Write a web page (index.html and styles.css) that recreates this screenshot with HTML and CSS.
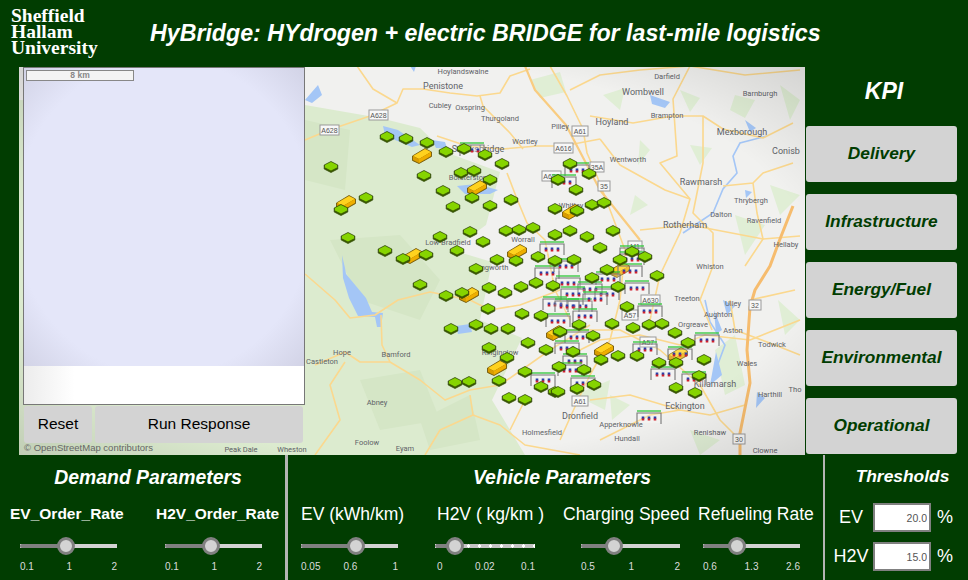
FILE: index.html
```html
<!DOCTYPE html>
<html lang="en">

<head>
    <meta charset="UTF-8">
    <meta name="viewport" content="width=device-width, initial-scale=1.0">
    <title>HyBridge</title>
    <link rel="stylesheet" href="styles.css">
</head>

<body>
    <header class="header">
        <div class="logo">Sheffield<br>Hallam<br>University</div>
        <h1 class="title">HyBridge: HYdrogen + electric BRIDGE for last-mile logistics</h1>
    </header>

    <div class="main">
        <div class="map">
            <svg class="mapimg" viewBox="19 67 786 388" width="786" height="388">
                <defs>
                    <radialGradient id="fade" cx="50%" cy="50%" r="72%">
                        <stop offset="70%" stop-color="#000" stop-opacity="0" />
                        <stop offset="100%" stop-color="#000" stop-opacity="0.13" />
                    </radialGradient>
                    <g id="pin">
                        <path d="M-6.800,-2 L0,-5.500 L6.800,-2 L6.800,2 L0,5.500 L-6.800,2 Z" fill="#3c5c00" stroke="#2c4700" stroke-width="0.7" />
                        <path d="M-6,-2 L0,-5 L6,-2 L6,0.500 L0,3.500 L-6,0.500 Z" fill="#86d400" />
                    </g>
                    <g id="fuel">
                        <path d="M-9.500,0 L3,-7.500 L9.500,-4 L9.500,0.500 L-3,7.500 L-9.500,4.500 Z" fill="#8a6400" stroke="#6d5200" stroke-width="0.8" />
                        <path d="M-9,0 L3,-7 L9,-4 L-3,3 Z" fill="#ffd21f" />
                        <path d="M-3,3 L9,-4 L9,0 L-3,7 Z" fill="#eeae00" />
                        <path d="M-9,0 L-3,3 L-3,7 L-9,4 Z" fill="#d99c00" />
                    </g>
                    <g id="station">
                        <rect x="-12" y="-4" width="24" height="10" fill="#fff" fill-opacity="0.2" />
                        <path d="M-12,7 V-4 H12 V7" fill="none" stroke="#777" stroke-width="1.1" />
                        <path d="M-12,-6 H12" stroke="#2fc83a" stroke-width="1.3" />
                        <path d="M-6,-0.500 V2 M0,-0.500 V2 M6,-0.500 V2" stroke="#2a3fa8" stroke-width="2.6" />
                        <path d="M-6,1.500 V3.500 M0,1.500 V3.500 M6,1.500 V3.500" stroke="#d0202c" stroke-width="2.6" />
                    </g>
                </defs>

                <rect x="19" y="67" width="786" height="388" fill="#f1f1ef" />

                <!-- peak district and small green bits -->
                <path class="park" d="M19,100 L305,105 L380,118 L420,128 L445,152 L500,172 L486,225 L452,250 L492,262 L480,320 L522,338 L492,400 L525,455 L19,455 Z" />
                <path class="park2" d="M330,240 L400,235 L440,280 L420,320 L360,300 Z M360,380 L420,370 L440,420 L380,430 Z M305,120 L350,130 L345,190 L305,180 Z M420,420 L470,395 L480,440 L430,450 Z" />
                <path class="patch" d="M530,80 L560,72 L566,92 L540,98 Z M603,95 L625,88 L620,110 Z M680,90 L700,98 L690,112 Z M735,95 L755,100 L745,118 L730,110 Z M640,140 L650,150 L638,165 Z M690,145 L712,148 L700,165 Z M635,195 L648,205 L630,215 Z M735,215 L765,225 L745,255 Z M780,85 L800,100 L790,120 Z M770,185 L800,195 L780,215 Z M575,395 L610,380 L605,410 Z M715,350 L735,335 L745,385 L725,395 Z M690,430 L720,440 L700,455 Z M778,300 L800,320 L785,335 Z M610,395 L630,405 L612,420 Z" />

                <!-- water -->
                <path class="river" d="M767,136 L740,143 L733,156 L737,173 L723,189 L713,213 L683,233" />
                <path class="river" d="M705,300 L710,322 L725,345 L712,380" />
                <path class="water" d="M383,126 L398,130 L420,145 L412,147 L395,140 L385,135 Z M432,140 L445,142 L447,148 L436,148 Z M457,186 L476,184 L498,190 L490,194 L465,194 Z M342,255 L345,268 L346,274 L366,298 L372,312 L383,313 L381,327 L377,327 L375,317 L358,316 L349,298 L343,278 Z M456,326 L470,324 L472,332 L458,334 Z M318,85 L322,95 L312,103 L305,100 Z M410,66 L416,66 L414,72 Z M650,95 L670,102 L665,108 L652,104 Z M745,120 L756,128 L750,132 Z M723,300 L735,306 L727,315 Z M745,190 L752,192 L746,198 Z M714,310 L722,330 L716,334 Z M757,392 L765,398 L756,408 Z M716,352 L722,375 L710,385 Z" />

                <!-- roads -->
                <g class="roads">
                    <path d="M305,140 L329,130 L370,116 L397,103 L403,89 L423,89 L450,93 L477,96 L500,93 L510,76 L530,69" />
                    <path d="M357,66 L373,89 L397,103" />
                    <path d="M437,136 L467,146 L503,149 L537,146 L563,146 L600,139" />
                    <path d="M550,66 L567,96 L583,129 L587,153 L597,176 L612,215 L625,250 L620,300 L610,340 L590,375 L578,400 L560,440" />
                    <path d="M480,96 L483,106 L510,133 L523,149" />
                    <path d="M507,173 L517,199 L527,223 L545,240 L555,290 L570,320" />
                    <path d="M590,116 L633,123 L673,116 L703,116 L723,129 L763,138 L793,123" />
                    <path d="M690,66 L673,99 L677,156 L660,163 L690,199 L680,233 L660,275 L650,320" />
                    <path d="M703,116 L703,163 L693,213 L713,233 L713,266 L700,300 L712,330" />
                    <path d="M793,163 L763,173 L753,183 L723,186 M753,183 L757,213 L763,239 L745,266" />
                    <path d="M600,139 L620,165 L665,190 L690,199" />
                    <path d="M570,90 L600,75 L640,70 M640,70 L690,66 M690,66 L745,75 L800,70" />
                    <path d="M305,274 L335,300 L350,318 L375,315 L398,300 L430,292 L470,300 L490,310 L520,305 L560,290" />
                    <path d="M381,315 L382,345 L390,362 L420,380 L445,400 L470,390 L500,385 L550,350 L590,325" />
                    <path d="M315,365 L345,352 L360,362 L390,362" />
                    <path d="M345,362 L330,385 L340,420 L315,455 M470,395 L473,415 L440,430 L425,455" />
                    <path d="M473,415 L500,425 L525,445 L580,455 M525,400 L510,430" />
                    <path d="M570,355 L600,340 L640,335 L680,345 L705,335 L750,340 L800,320" />
                    <path d="M560,330 L620,330 L660,350 L700,385 L720,420 L740,440" />
                    <path d="M590,400 L630,395 L680,410 L710,415 L745,405 M600,440 L650,415 L680,410" />
                    <path d="M730,300 L735,330 L775,345 L800,355" />
                    <path d="M750,300 L795,290 M640,230 L690,225 L763,239 L800,236" />
                    <path class="motorway" d="M793,206 L780,239 L770,266 L755,290 L750,307 L747,350 L750,383 L740,433 L740,455" />
                    <path class="motorway-thin" d="M525,66 L535,90 L566,125 L600,190 L640,240" />
                </g>

                <!-- place names -->
                <g class="place">
                    <text x="463" y="74">Hoylandswaine</text>
                    <text x="440" y="108">Cubley</text>
                    <text x="470" y="110">Oxspring</text>
                    <text x="500" y="121">Thurgoland</text>
                    <text x="560" y="129">Pilley</text>
                    <text x="525" y="144">Wortley</text>
                    <text x="470" y="180">Bolsterstone</text>
                    <text x="571" y="208">Whitley</text>
                    <text x="523" y="242">Worrall</text>
                    <text x="448" y="245">Low Bradfield</text>
                    <text x="490" y="270">Dungworth</text>
                    <text x="667" y="79">Darfield</text>
                    <text x="760" y="96">Barnburgh</text>
                    <text x="667" y="118">Brampton</text>
                    <text x="628" y="162">Wentworth</text>
                    <text x="751" y="203">Thrybergh</text>
                    <text x="721" y="217">Dalton</text>
                    <text x="764" y="223">Ravenfield</text>
                    <text x="786" y="247">Hellaby</text>
                    <text x="710" y="269">Whiston</text>
                    <text x="687" y="301">Treeton</text>
                    <text x="693" y="327">Orgreave</text>
                    <text x="733" y="306">Ulley</text>
                    <text x="718" y="317">Aughton</text>
                    <text x="733" y="333">Aston</text>
                    <text x="772" y="347">Todwick</text>
                    <text x="747" y="366">Wales</text>
                    <text x="770" y="397">Harthill</text>
                    <text x="795" y="392">Tho</text>
                    <text x="621" y="427">Apperknowle</text>
                    <text x="627" y="441">Hundall</text>
                    <text x="710" y="435">Renishaw</text>
                    <text x="765" y="453">Clowne</text>
                    <text x="342" y="355">Hope</text>
                    <text x="396" y="357">Bamford</text>
                    <text x="322" y="364">Castleton</text>
                    <text x="377" y="405">Abney</text>
                    <text x="367" y="445">Foolow</text>
                    <text x="405" y="451">Eyam</text>
                    <text x="542" y="435">Holmesfield</text>
                    <text x="500" y="355">Ringinglow</text>
                    <text x="241" y="452">Peak Dale</text>
                    <text x="292" y="452">Wheston</text>
                </g>
                <g class="town">
                    <text x="443" y="89">Penistone</text>
                    <text x="478" y="152">Stocksbridge</text>
                    <text x="643" y="95">Wombwell</text>
                    <text x="612" y="125">Hoyland</text>
                    <text x="742" y="135">Mexborough</text>
                    <text x="786" y="154">Conisb</text>
                    <text x="701" y="185">Rawmarsh</text>
                    <text x="685" y="228">Rotherham</text>
                    <text x="715" y="387">Killamarsh</text>
                    <text x="685" y="409">Eckington</text>
                    <text x="580" y="419">Dronfield</text>
                </g>

                <!-- road badges -->
                <g class="badge">
                    <rect x="369" y="110" width="19" height="10" /><text x="378.500" y="118">A628</text>
                    <rect x="320" y="125" width="19" height="10" /><text x="329.500" y="133">A628</text>
                    <rect x="572" y="126" width="16" height="10" /><text x="580" y="134">A61</text>
                    <rect x="554" y="143" width="19" height="10" /><text x="563.500" y="151">A616</text>
                    <rect x="542" y="171" width="19" height="10" /><text x="551.500" y="179">A629</text>
                    <rect x="590" y="162" width="14" height="10" /><text x="597" y="170">35A</text>
                    <rect x="598" y="181" width="12" height="10" /><text x="604" y="189">35</text>
                    <rect x="628" y="241" width="14" height="10" /><text x="635" y="249">M1</text>
                    <rect x="641" y="295" width="19" height="10" /><text x="650.500" y="303">A630</text>
                    <rect x="622" y="310" width="16" height="10" /><text x="630" y="318">A57</text>
                    <rect x="640" y="337" width="16" height="10" /><text x="648" y="345">A57</text>
                    <rect x="572" y="396" width="16" height="10" /><text x="580" y="404">A61</text>
                    <rect x="749" y="300" width="12" height="10" /><text x="755" y="308">32</text>
                    <rect x="733" y="434" width="12" height="10" /><text x="739" y="442">30</text>
                </g>

                <rect x="19" y="67" width="786" height="388" fill="url(#fade)" />

                <!-- fuel stations -->
                <use href="#fuel" x="422" y="156" />
                <use href="#fuel" x="477" y="188" />
                <use href="#fuel" x="346" y="203" />
                <use href="#fuel" x="572" y="212" />
                <use href="#fuel" x="517" y="252" />
                <use href="#fuel" x="413" y="256" />
                <use href="#fuel" x="469" y="295" />
                <use href="#fuel" x="497" y="368" />
                <use href="#fuel" x="620" y="270" />
                <use href="#fuel" x="556" y="333" />
                <use href="#fuel" x="604" y="350" />
                <use href="#fuel" x="678" y="355" />

                <!-- charge points -->
                <use href="#station" x="472" y="149" />
                <use href="#station" x="577" y="169" />
                <use href="#station" x="564" y="181" />
                <use href="#station" x="552" y="248" />
                <use href="#station" x="547" y="272" />
                <use href="#station" x="566" y="265" />
                <use href="#station" x="632" y="252" />
                <use href="#station" x="632" y="258" />
                <use href="#station" x="630" y="270" />
                <use href="#station" x="608" y="278" />
                <use href="#station" x="637" y="287" />
                <use href="#station" x="568" y="282" />
                <use href="#station" x="590" y="288" />
                <use href="#station" x="573" y="293" />
                <use href="#station" x="555" y="303" />
                <use href="#station" x="580" y="305" />
                <use href="#station" x="607" y="293" />
                <use href="#station" x="558" y="320" />
                <use href="#station" x="585" y="315" />
                <use href="#station" x="567" y="305" />
                <use href="#station" x="595" y="298" />
                <use href="#station" x="650" y="310" />
                <use href="#station" x="577" y="336" />
                <use href="#station" x="645" y="348" />
                <use href="#station" x="567" y="347" />
                <use href="#station" x="575" y="360" />
                <use href="#station" x="570" y="369" />
                <use href="#station" x="680" y="353" />
                <use href="#station" x="707" y="339" />
                <use href="#station" x="663" y="373" />
                <use href="#station" x="694" y="378" />
                <use href="#station" x="583" y="382" />
                <use href="#station" x="649" y="417" />
                <use href="#station" x="543" y="379" />

                <!-- depots -->
                <use href="#pin" x="387" y="137" /><use href="#pin" x="406" y="139" /><use href="#pin" x="427" y="143" />
                <use href="#pin" x="446" y="152" /><use href="#pin" x="464" y="149" /><use href="#pin" x="485" y="155" />
                <use href="#pin" x="502" y="164" /><use href="#pin" x="331" y="167" /><use href="#pin" x="424" y="176" />
                <use href="#pin" x="461" y="173" /><use href="#pin" x="474" y="171" /><use href="#pin" x="490" y="180" />
                <use href="#pin" x="443" y="191" /><use href="#pin" x="366" y="198" /><use href="#pin" x="341" y="210" />
                <use href="#pin" x="472" y="198" /><use href="#pin" x="453" y="207" /><use href="#pin" x="490" y="206" />
                <use href="#pin" x="511" y="200" /><use href="#pin" x="555" y="209" /><use href="#pin" x="576" y="190" />
                <use href="#pin" x="570" y="164" /><use href="#pin" x="558" y="180" /><use href="#pin" x="589" y="174" />
                <use href="#pin" x="592" y="205" /><use href="#pin" x="604" y="203" /><use href="#pin" x="577" y="211" />
                <use href="#pin" x="348" y="238" /><use href="#pin" x="440" y="237" /><use href="#pin" x="470" y="232" />
                <use href="#pin" x="483" y="242" /><use href="#pin" x="506" y="231" /><use href="#pin" x="519" y="230" />
                <use href="#pin" x="533" y="228" /><use href="#pin" x="555" y="235" /><use href="#pin" x="570" y="231" />
                <use href="#pin" x="587" y="237" /><use href="#pin" x="613" y="231" /><use href="#pin" x="385" y="251" />
                <use href="#pin" x="457" y="251" /><use href="#pin" x="426" y="255" /><use href="#pin" x="600" y="248" />
                <use href="#pin" x="403" y="259" /><use href="#pin" x="497" y="260" /><use href="#pin" x="516" y="261" />
                <use href="#pin" x="476" y="269" /><use href="#pin" x="538" y="257" /><use href="#pin" x="420" y="285" />
                <use href="#pin" x="446" y="296" /><use href="#pin" x="462" y="293" /><use href="#pin" x="489" y="288" />
                <use href="#pin" x="505" y="293" /><use href="#pin" x="521" y="287" /><use href="#pin" x="536" y="283" />
                <use href="#pin" x="553" y="286" /><use href="#pin" x="488" y="309" /><use href="#pin" x="522" y="314" />
                <use href="#pin" x="541" y="316" /><use href="#pin" x="451" y="329" /><use href="#pin" x="476" y="325" />
                <use href="#pin" x="491" y="329" /><use href="#pin" x="508" y="329" /><use href="#pin" x="528" y="343" />
                <use href="#pin" x="546" y="350" /><use href="#pin" x="489" y="348" /><use href="#pin" x="507" y="358" />
                <use href="#pin" x="525" y="372" /><use href="#pin" x="499" y="381" /><use href="#pin" x="455" y="383" />
                <use href="#pin" x="469" y="382" /><use href="#pin" x="541" y="387" /><use href="#pin" x="509" y="398" />
                <use href="#pin" x="525" y="400" /><use href="#pin" x="555" y="392" /><use href="#pin" x="555" y="261" />
                <use href="#pin" x="574" y="260" /><use href="#pin" x="607" y="270" /><use href="#pin" x="592" y="278" />
                <use href="#pin" x="657" y="276" /><use href="#pin" x="618" y="287" /><use href="#pin" x="627" y="307" />
                <use href="#pin" x="579" y="325" /><use href="#pin" x="612" y="324" /><use href="#pin" x="633" y="328" />
                <use href="#pin" x="649" y="325" /><use href="#pin" x="662" y="324" /><use href="#pin" x="675" y="333" />
                <use href="#pin" x="560" y="332" /><use href="#pin" x="593" y="336" /><use href="#pin" x="632" y="252" />
                <use href="#pin" x="645" y="257" /><use href="#pin" x="620" y="260" /><use href="#pin" x="618" y="356" />
                <use href="#pin" x="601" y="360" /><use href="#pin" x="637" y="356" /><use href="#pin" x="688" y="343" />
                <use href="#pin" x="704" y="360" /><use href="#pin" x="659" y="363" /><use href="#pin" x="676" y="363" />
                <use href="#pin" x="559" y="367" /><use href="#pin" x="584" y="370" /><use href="#pin" x="573" y="352" />
                <use href="#pin" x="699" y="376" /><use href="#pin" x="676" y="388" /><use href="#pin" x="695" y="393" />
                <use href="#pin" x="594" y="385" /><use href="#pin" x="577" y="389" /><use href="#pin" x="558" y="392" />
            </svg>

            <div class="panel">
                <div class="plot">
                    <div class="scalebar">8 km</div>
                </div>
                <div class="plotfoot"></div>
                <div class="actions">
                    <button class="btn btn-reset">Reset</button>
                    <button class="btn btn-run">Run Response</button>
                </div>
            </div>
            <div class="attrib">© OpenStreetMap contributors</div>
        </div>

        <aside class="kpi">
            <div class="kpi-head">KPI</div>
            <button class="kpi-btn">Delivery</button>
            <button class="kpi-btn">Infrastructure</button>
            <button class="kpi-btn">Energy/Fuel</button>
            <button class="kpi-btn">Environmental</button>
            <button class="kpi-btn">Operational</button>
        </aside>
    </div>

    <div class="controls">
        <section class="group group-demand">
            <h2 class="group-head">Demand Parameters</h2>
            <div class="params">
                <div class="param">
                    <div class="param-label bold shift-a">EV_Order_Rate</div>
                    <div class="slider"><span class="fill" style="width:46px"></span><span class="thumb" style="left:37px"></span></div>
                    <div class="ticks ticks-mid"><span>0.1</span><span>1</span><span>2</span></div>
                </div>
                <div class="param param-h2v-order">
                    <div class="param-label bold shift-b">H2V_Order_Rate</div>
                    <div class="slider"><span class="fill" style="width:46px"></span><span class="thumb" style="left:37px"></span></div>
                    <div class="ticks ticks-mid"><span>0.1</span><span>1</span><span>2</span></div>
                </div>
            </div>
        </section>

        <section class="group group-vehicle">
            <h2 class="group-head">Vehicle Parameters</h2>
            <div class="params">
                <div class="param">
                    <div class="param-label">EV (kWh/km)</div>
                    <div class="slider"><span class="fill" style="width:55px"></span><span class="thumb" style="left:46px"></span></div>
                    <div class="ticks ticks-wide"><span>0.05</span><span>0.6</span><span>1</span></div>
                </div>
                <div class="param param-h2v">
                    <div class="param-label shift-c">H2V ( kg/km )</div>
                    <div class="slider slider-dots"><span class="fill" style="width:20px"></span><span class="thumb" style="left:11px"></span></div>
                    <div class="ticks ticks-inset"><span>0</span><span>0.02</span><span>0.1</span></div>
                </div>
                <div class="param param-charge">
                    <div class="param-label shift-d">Charging Speed</div>
                    <div class="slider"><span class="fill" style="width:33px"></span><span class="thumb" style="left:24px"></span></div>
                    <div class="ticks ticks-mid"><span>0.5</span><span>1</span><span>2</span></div>
                </div>
                <div class="param param-refuel">
                    <div class="param-label shift-e">Refueling Rate</div>
                    <div class="slider"><span class="fill" style="width:34px"></span><span class="thumb" style="left:25px"></span></div>
                    <div class="ticks"><span>0.6</span><span>1.3</span><span>2.6</span></div>
                </div>
            </div>
        </section>

        <section class="group group-thresholds">
            <h2 class="group-head small">Thresholds</h2>
            <div class="thresh">
                <span class="thresh-label">EV</span>
                <input class="thresh-input" type="text" value="20.0">
                <span class="thresh-unit">%</span>
            </div>
            <div class="thresh">
                <span class="thresh-label">H2V</span>
                <input class="thresh-input" type="text" value="15.0">
                <span class="thresh-unit">%</span>
            </div>
        </section>
    </div>
</body>

</html>
```

FILE: styles.css
```css
* {
    margin: 0;
    border: 0;
    padding: 0;
    box-sizing: border-box;
}

body {
    width: 968px;
    height: 580px;
    overflow: hidden;
    background-color: #013d01;
    color: white;
    font-family: "Liberation Sans", Arial, sans-serif;
}

/* top bar */
.header {
    height: 67px;
    display: flex;
    align-items: flex-start;
}

.logo {
    margin: 8px 0 0 11px;
    width: 139px;
    font-family: "Liberation Serif", serif;
    font-weight: bold;
    font-size: 19.5px;
    line-height: 16px;
}

.title {
    margin-top: 19px;
    font-size: 23.2px;
    line-height: 28px;
    font-weight: bold;
    font-style: italic;
    white-space: nowrap;
}

/* map + kpi */
.main {
    height: 388px;
    display: flex;
    padding-left: 19px;
}

.map {
    position: relative;
    width: 786px;
    height: 388px;
    overflow: hidden;
}

.mapimg {
    display: block;
}

.park {
    fill: #dcebcf;
}

.park2 {
    fill: #d5e6c6;
}

.patch {
    fill: #e0eed5;
}

.water {
    fill: #a4c6f6;
}

.river {
    fill: none;
    stroke: #a4c6f6;
    stroke-width: 1.6;
}

.roads path {
    fill: none;
    stroke: #fbd88e;
    stroke-width: 1.6;
    stroke-linejoin: round;
}

.roads .motorway {
    stroke: #f6bc6e;
    stroke-width: 3;
}

.roads .motorway-thin {
    stroke: #f9cc80;
    stroke-width: 2.2;
}

.place text,
.town text {
    text-anchor: middle;
    fill: #5f6368;
    font-family: Roboto, "Liberation Sans", sans-serif;
    font-size: 7.5px;
}

.town text {
    font-size: 9px;
}

.badge rect {
    fill: #f8f8f8;
    stroke: #9a9a9a;
    stroke-width: 1;
}

.badge text {
    text-anchor: middle;
    fill: #555;
    font-size: 7px;
}

/* panel on top of the map */
.panel {
    position: absolute;
    left: 4px;
    top: 0;
    width: 282px;
    display: flex;
    flex-direction: column;
}

.plot {
    height: 299px;
    padding: 2px 0 0 2px;
    border: 1px solid #777;
    border-width: 1px 1px 0 1px;
    background: radial-gradient(ellipse at center, #e4e6f9 75%, #d2d3e6 100%);
}

.scalebar {
    width: 108px;
    height: 11px;
    background-color: #f4f4f4;
    border: 1px solid #888;
    color: #888;
    font-size: 8.5px;
    font-weight: bold;
    line-height: 9px;
    text-align: center;
}

.plotfoot {
    height: 39px;
    background: linear-gradient(to right, #ececec, white 18%);
    border: 1px solid #777;
    border-width: 0 1px 1px 1px;
}

.actions {
    display: flex;
    gap: 3px;
    padding: 1px 0 0 1px;
}

.btn {
    height: 37px;
    padding-bottom: 2px;
    background-color: #d3d3d3;
    border-radius: 3px;
    color: black;
    font-family: inherit;
    font-size: 15.5px;
}

.btn-reset {
    width: 68px;
}

.btn-run {
    width: 208px;
}

.attrib {
    position: absolute;
    left: 5px;
    bottom: 2px;
    font-size: 9.5px;
    color: #666;
}

.kpi {
    flex: 1;
    padding-left: 1px;
    display: flex;
    flex-direction: column;
    gap: 12px;
}

.kpi-head {
    width: 156px;
    height: 47px;
    padding-top: 10px;
    font-size: 23px;
    line-height: 28px;
    font-weight: bold;
    font-style: italic;
    text-align: center;
}

.kpi-btn {
    width: 151px;
    height: 56px;
    padding-bottom: 2px;
    background-color: #d3d3d3;
    border-radius: 3px;
    color: #013d01;
    font-family: inherit;
    font-size: 17.3px;
    font-weight: bold;
    font-style: italic;
}

/* sliders row */
.controls {
    height: 125px;
    display: flex;
}

.group {
    padding-top: 11px;
}

.group-demand {
    width: 285px;
    padding-left: 20px;
}

.group-vehicle {
    width: 540px;
    padding-left: 13px;
    border-left: 3px solid #b4b4b4;
    border-right: 2px solid #b4b4b4;
}

.group-thresholds {
    flex: 1;
    padding-left: 8px;
}

.group-head {
    height: 22px;
    font-size: 19.4px;
    line-height: 22px;
    font-style: italic;
    text-align: center;
}

.group-demand .group-head {
    margin-left: -20px;
    width: 296px;
}

.group-vehicle .group-head {
    margin-left: -13px;
    padding-left: 13px;
}

.group-head.small {
    font-size: 17.4px;
    line-height: 20px;
    height: 20px;
    padding-left: 4px;
}

.params {
    display: flex;
}

.param {
    width: 97px;
}

.param-h2v-order {
    margin-left: 48px;
}

.param-h2v {
    width: 100px;
    margin-left: 37px;
}

.param-charge {
    width: 99px;
    margin-left: 46px;
}

.param-refuel {
    margin-left: 23px;
}

.param-label {
    margin-top: 17px;
    height: 18px;
    font-size: 17.5px;
    line-height: 18px;
    white-space: nowrap;
}

.param-label.bold {
    font-size: 15.5px;
    font-weight: bold;
}

.shift-a {
    margin-left: -10px;
}

.shift-b {
    margin-left: -9px;
}

.shift-c {
    margin-left: 2px;
}

.shift-d {
    margin-left: -18px;
}

.shift-e {
    margin-left: -5px;
}

.slider {
    position: relative;
    margin-top: 14px;
    height: 18px;
    background: linear-gradient(#d3d3d3, #d3d3d3) center / 100% 4px no-repeat;
}

.slider-dots {
    background:
        radial-gradient(circle, white 1.5px, transparent 1.8px) 6px center / 11px 4px repeat-x,
        linear-gradient(#c4c4c4, #c4c4c4) center / 100% 4px no-repeat;
}

.fill {
    position: absolute;
    left: 0;
    top: 7px;
    height: 4px;
    border-radius: 2px;
    background-color: #808080;
}

.thumb {
    position: absolute;
    top: 0;
    width: 18px;
    height: 18px;
    border: 3px solid #808080;
    border-radius: 50%;
    background-color: #d3d3d3;
}

.ticks {
    margin-top: 7px;
    display: flex;
    justify-content: space-between;
    font-size: 10px;
    line-height: 10px;
    color: #dcdcdc;
}

.ticks-mid span:nth-child(2) {
    margin-right: 7px;
}

.ticks-wide span:nth-child(2) {
    margin-right: 12px;
}

.ticks-inset {
    padding-left: 2px;
}

.ticks-inset span:nth-child(2) {
    margin-left: 6px;
}

/* thresholds */
.thresh {
    display: flex;
    align-items: center;
    height: 29px;
    margin-bottom: 10px;
    font-size: 18px;
}

.group-head.small + .thresh {
    margin-top: 17px;
}

.thresh-label {
    width: 36px;
    text-align: center;
    margin-right: 4px;
}

.thresh-input {
    width: 58px;
    height: 29px;
    padding-right: 2px;
    border: 2px solid #808080;
    background-color: white;
    color: #555;
    font-family: inherit;
    font-size: 10.5px;
    text-align: right;
}

.thresh-unit {
    margin-left: 6px;
}
```
